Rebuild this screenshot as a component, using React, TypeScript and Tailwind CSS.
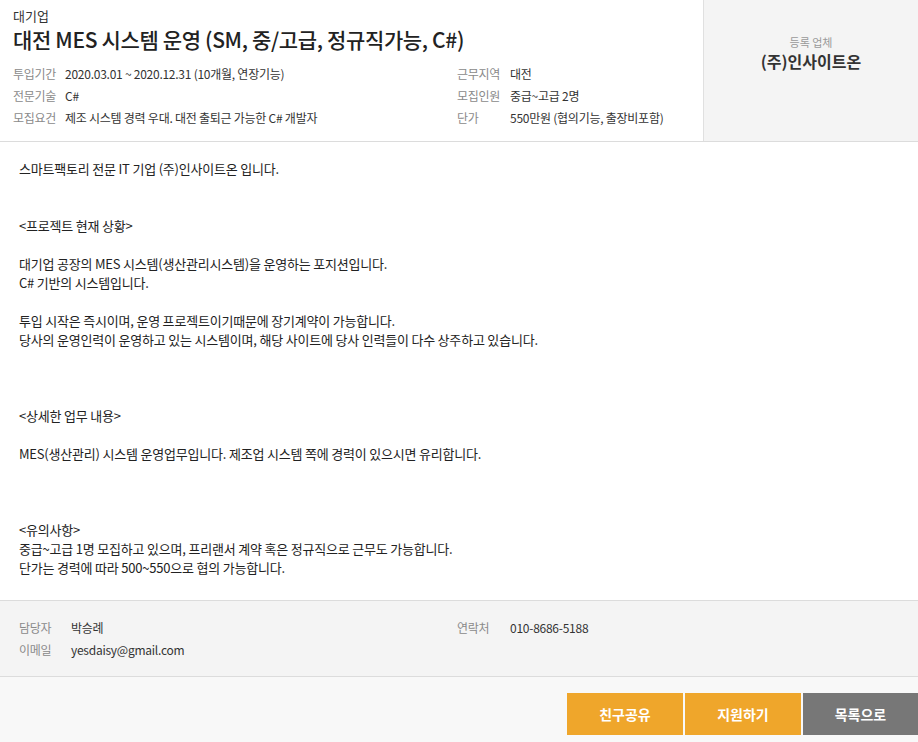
const font = { fontFamily: '"Noto Sans CJK KR", "Noto Sans", sans-serif' };

const infoLeft = [
  ["투입기간", "2020.03.01 ~ 2020.12.31 (10개월, 연장기능)"],
  ["전문기술", "C#"],
  ["모집요건", "제조 시스템 경력 우대. 대전 출퇴근 가능한 C# 개발자"],
];

const infoRight = [
  ["근무지역", "대전"],
  ["모집인원", "중급~고급 2명"],
  ["단가", "550만원 (협의기능, 출장비포함)"],
];

const body = [
  "스마트팩토리 전문 IT 기업 (주)인사이트온 입니다.",
  "",
  "",
  "<프로젝트 현재 상황>",
  "",
  "대기업 공장의 MES 시스템(생산관리시스템)을 운영하는 포지션입니다.",
  "C# 기반의 시스템입니다.",
  "",
  "투입 시작은 즉시이며, 운영 프로젝트이기때문에 장기계약이 가능합니다.",
  "당사의 운영인력이 운영하고 있는 시스템이며, 해당 사이트에 당사 인력들이 다수 상주하고 있습니다.",
  "",
  "",
  "",
  "<상세한 업무 내용>",
  "",
  "MES(생산관리) 시스템 운영업무입니다. 제조업 시스템 쪽에 경력이 있으시면 유리합니다.",
  "",
  "",
  "",
  "<유의사항>",
  "중급~고급 1명 모집하고 있으며, 프리랜서 계약 혹은 정규직으로 근무도 가능합니다.",
  "단가는 경력에 따라 500~550으로 협의 가능합니다.",
];

const InfoRow = ({ label, value, w }: { label: string; value: string; w: string }) => (
  <div className="flex h-[22px] items-center text-[12px] tracking-[-0.25px]">
    <span className={`${w} shrink-0 text-[#8a8a8a]`}>{label}</span>
    <span className="text-[#333]">{value}</span>
  </div>
);

export default function App() {
  return (
    <div style={font} className="w-[918px] h-[742px] overflow-hidden bg-[#f8f8f8] text-[#333]">
      {/* Header */}
      <div className="flex h-[142px] border-b border-[#dcdcdc] bg-white">
        <div className="w-[703px] px-[13px] pt-[6px]">
          <div className="text-[13px] leading-[19px] text-[#333]">대기업</div>
          <h1 className="text-[21px] leading-[28px] font-medium tracking-[-0.35px] text-[#222]">
            대전 MES 시스템 운영 (SM, 중/고급, 정규직가능, C#)
          </h1>
          <div className="mt-[10px] grid grid-cols-[444px_1fr]">
            <div>
              {infoLeft.map(([l, v]) => (
                <InfoRow key={l} label={l} value={v} w="w-[52px]" />
              ))}
            </div>
            <div>
              {infoRight.map(([l, v]) => (
                <InfoRow key={l} label={l} value={v} w="w-[53px]" />
              ))}
            </div>
          </div>
        </div>
        <div className="flex-1 border-l border-[#e0e0e0] bg-[#f4f4f4] pt-[34px] text-center">
          <div className="text-[11px] leading-[16px] text-[#999]">등록 업체</div>
          <div className="text-[16px] leading-[22px] font-bold text-[#333]">(주)인사이트온</div>
        </div>
      </div>

      {/* Body */}
      <div className="bg-white px-[19px] pt-[17px] pb-[23px] text-[13px] leading-[19px] tracking-[-0.2px] text-[#222]">
        {body.map((line, i) => (
          <div key={i} className="h-[19px] whitespace-pre">
            {line}
          </div>
        ))}
      </div>

      {/* Contact */}
      <div className="grid h-[77px] grid-cols-[438px_1fr] border-y border-[#dcdcdc] bg-[#f4f4f4] px-[19px] pt-[16px]">
        <div>
          <InfoRow label="담당자" value="박승례" w="w-[52px]" />
          <InfoRow label="이메일" value="yesdaisy@gmail.com" w="w-[52px]" />
        </div>
        <div>
          <InfoRow label="연락처" value="010-8686-5188" w="w-[53px]" />
        </div>
      </div>

      {/* Buttons */}
      <div className="flex justify-end gap-[2px] pt-[16px]">
        <button className="h-[42px] w-[116px] bg-[#efa62b] text-[14px] font-bold text-white">친구공유</button>
        <button className="h-[42px] w-[116px] bg-[#efa62b] text-[14px] font-bold text-white">지원하기</button>
        <button className="h-[42px] w-[115px] bg-[#777777] text-[14px] font-bold text-white">목록으로</button>
      </div>
    </div>
  );
}
